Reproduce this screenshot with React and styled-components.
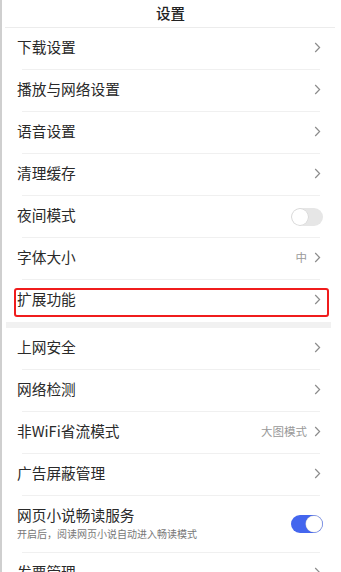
import React from 'react'
import styled, { createGlobalStyle } from 'styled-components'

const Global = createGlobalStyle`
  html, body { margin: 0; padding: 0; background: #fff; }
  body { font-family: "Noto Sans CJK SC", "Noto Sans", sans-serif; }
`

const Page = styled.div`
  width: 341px;
  height: 572px;
  overflow: hidden;
  box-sizing: border-box;
  border-left: 2px solid #cfcfcf;
  background: #fff;
`

const TitleBar = styled.div`
  height: 27px;
  box-sizing: border-box;
  padding-bottom: 3px;
  display: flex;
  align-items: center;
  justify-content: center;
  font-size: 14.5px;
  font-weight: 500;
  color: #222;
  margin-left: -2px;
`

const TitleLine = styled.div`
  height: 1px;
  background: #ececec;
  margin: 0 6px 0 3px;
`

const Row = styled.div`
  position: relative;
  height: ${p => p.$h || 41}px;
  box-sizing: border-box;
  display: flex;
  align-items: center;
  padding: 0 18px 3px 15px;
`

const Label = styled.div`
  flex: 1;
  display: flex;
  flex-direction: column;
  gap: 3px;
`

const Name = styled.div`
  font-size: 14.7px;
  color: #2a2a2a;
  line-height: 18px;
`

const Sub = styled.div`
  font-size: 10px;
  color: #777;
  line-height: 13px;
`

const Value = styled.span`
  font-size: 11.5px;
  color: #999;
  margin-right: 7px;
`

const Divider = styled.div`
  height: 1px;
  background: #f0f0f0;
  margin: 0 21px 0 20px;
`

const SectionGap = styled.div`
  height: 6px;
  background: #f1f1f1;
  margin: 1px 10px 0 4px;
`

const Highlight = styled.div`
  position: absolute;
  left: 12px;
  right: 12px;
  top: 8px;
  bottom: 4px;
  border: 2px solid #f01c1c;
  border-radius: 3px;
  pointer-events: none;
`

const Switch = styled.div`
  position: relative;
  width: 32px;
  height: 18px;
  border-radius: 9px;
  box-sizing: border-box;
  margin-top: 3px;
  background: ${p => (p.$on ? '#4466ee' : '#e6e6e6')};
  &::after {
    content: '';
    position: absolute;
    top: 1px;
    left: ${p => (p.$on ? '15px' : '1px')};
    width: 16px;
    height: 16px;
    border-radius: 50%;
    background: #fff;
    box-shadow: 0 0 0 0.5px #cfcfcf;
  }
`

const Chevron = () => (
  <svg width="7" height="11" viewBox="0 0 7 11">
    <path d="M1.2 1 L5.6 5.5 L1.2 10" fill="none" stroke="#8c8c8c" strokeWidth="1.2" />
  </svg>
)

const RightChevron = styled.div`
  display: flex;
  align-items: center;
  margin-right: 2px;
`

const Item = ({ name, sub, value, toggle, h, mark }) => (
  <Row $h={h}>
    <Label>
      <Name>{name}</Name>
      {sub && <Sub>{sub}</Sub>}
    </Label>
    {value && <Value>{value}</Value>}
    {toggle !== undefined ? (
      <Switch $on={toggle} />
    ) : (
      <RightChevron>
        <Chevron />
      </RightChevron>
    )}
    {mark && <Highlight />}
  </Row>
)

const groupA = [
  { name: '下载设置' },
  { name: '播放与网络设置' },
  { name: '语音设置' },
  { name: '清理缓存' },
  { name: '夜间模式', toggle: false },
  { name: '字体大小', value: '中' },
  { name: '扩展功能', mark: true },
]

const groupB = [
  { name: '上网安全' },
  { name: '网络检测' },
  { name: '非WiFi省流模式', value: '大图模式' },
  { name: '广告屏蔽管理' },
  { name: '网页小说畅读服务', sub: '开启后，阅读网页小说自动进入畅读模式', toggle: true, h: 56 },
  { name: '发票管理' },
]

const List = ({ items }) =>
  items.map((it, i) => (
    <React.Fragment key={it.name}>
      {i > 0 && <Divider />}
      <Item {...it} />
    </React.Fragment>
  ))

export default function App() {
  return (
    <Page>
      <Global />
      <TitleBar>设置</TitleBar>
      <TitleLine />
      <List items={groupA} />
      <SectionGap />
      <List items={groupB} />
    </Page>
  )
}
